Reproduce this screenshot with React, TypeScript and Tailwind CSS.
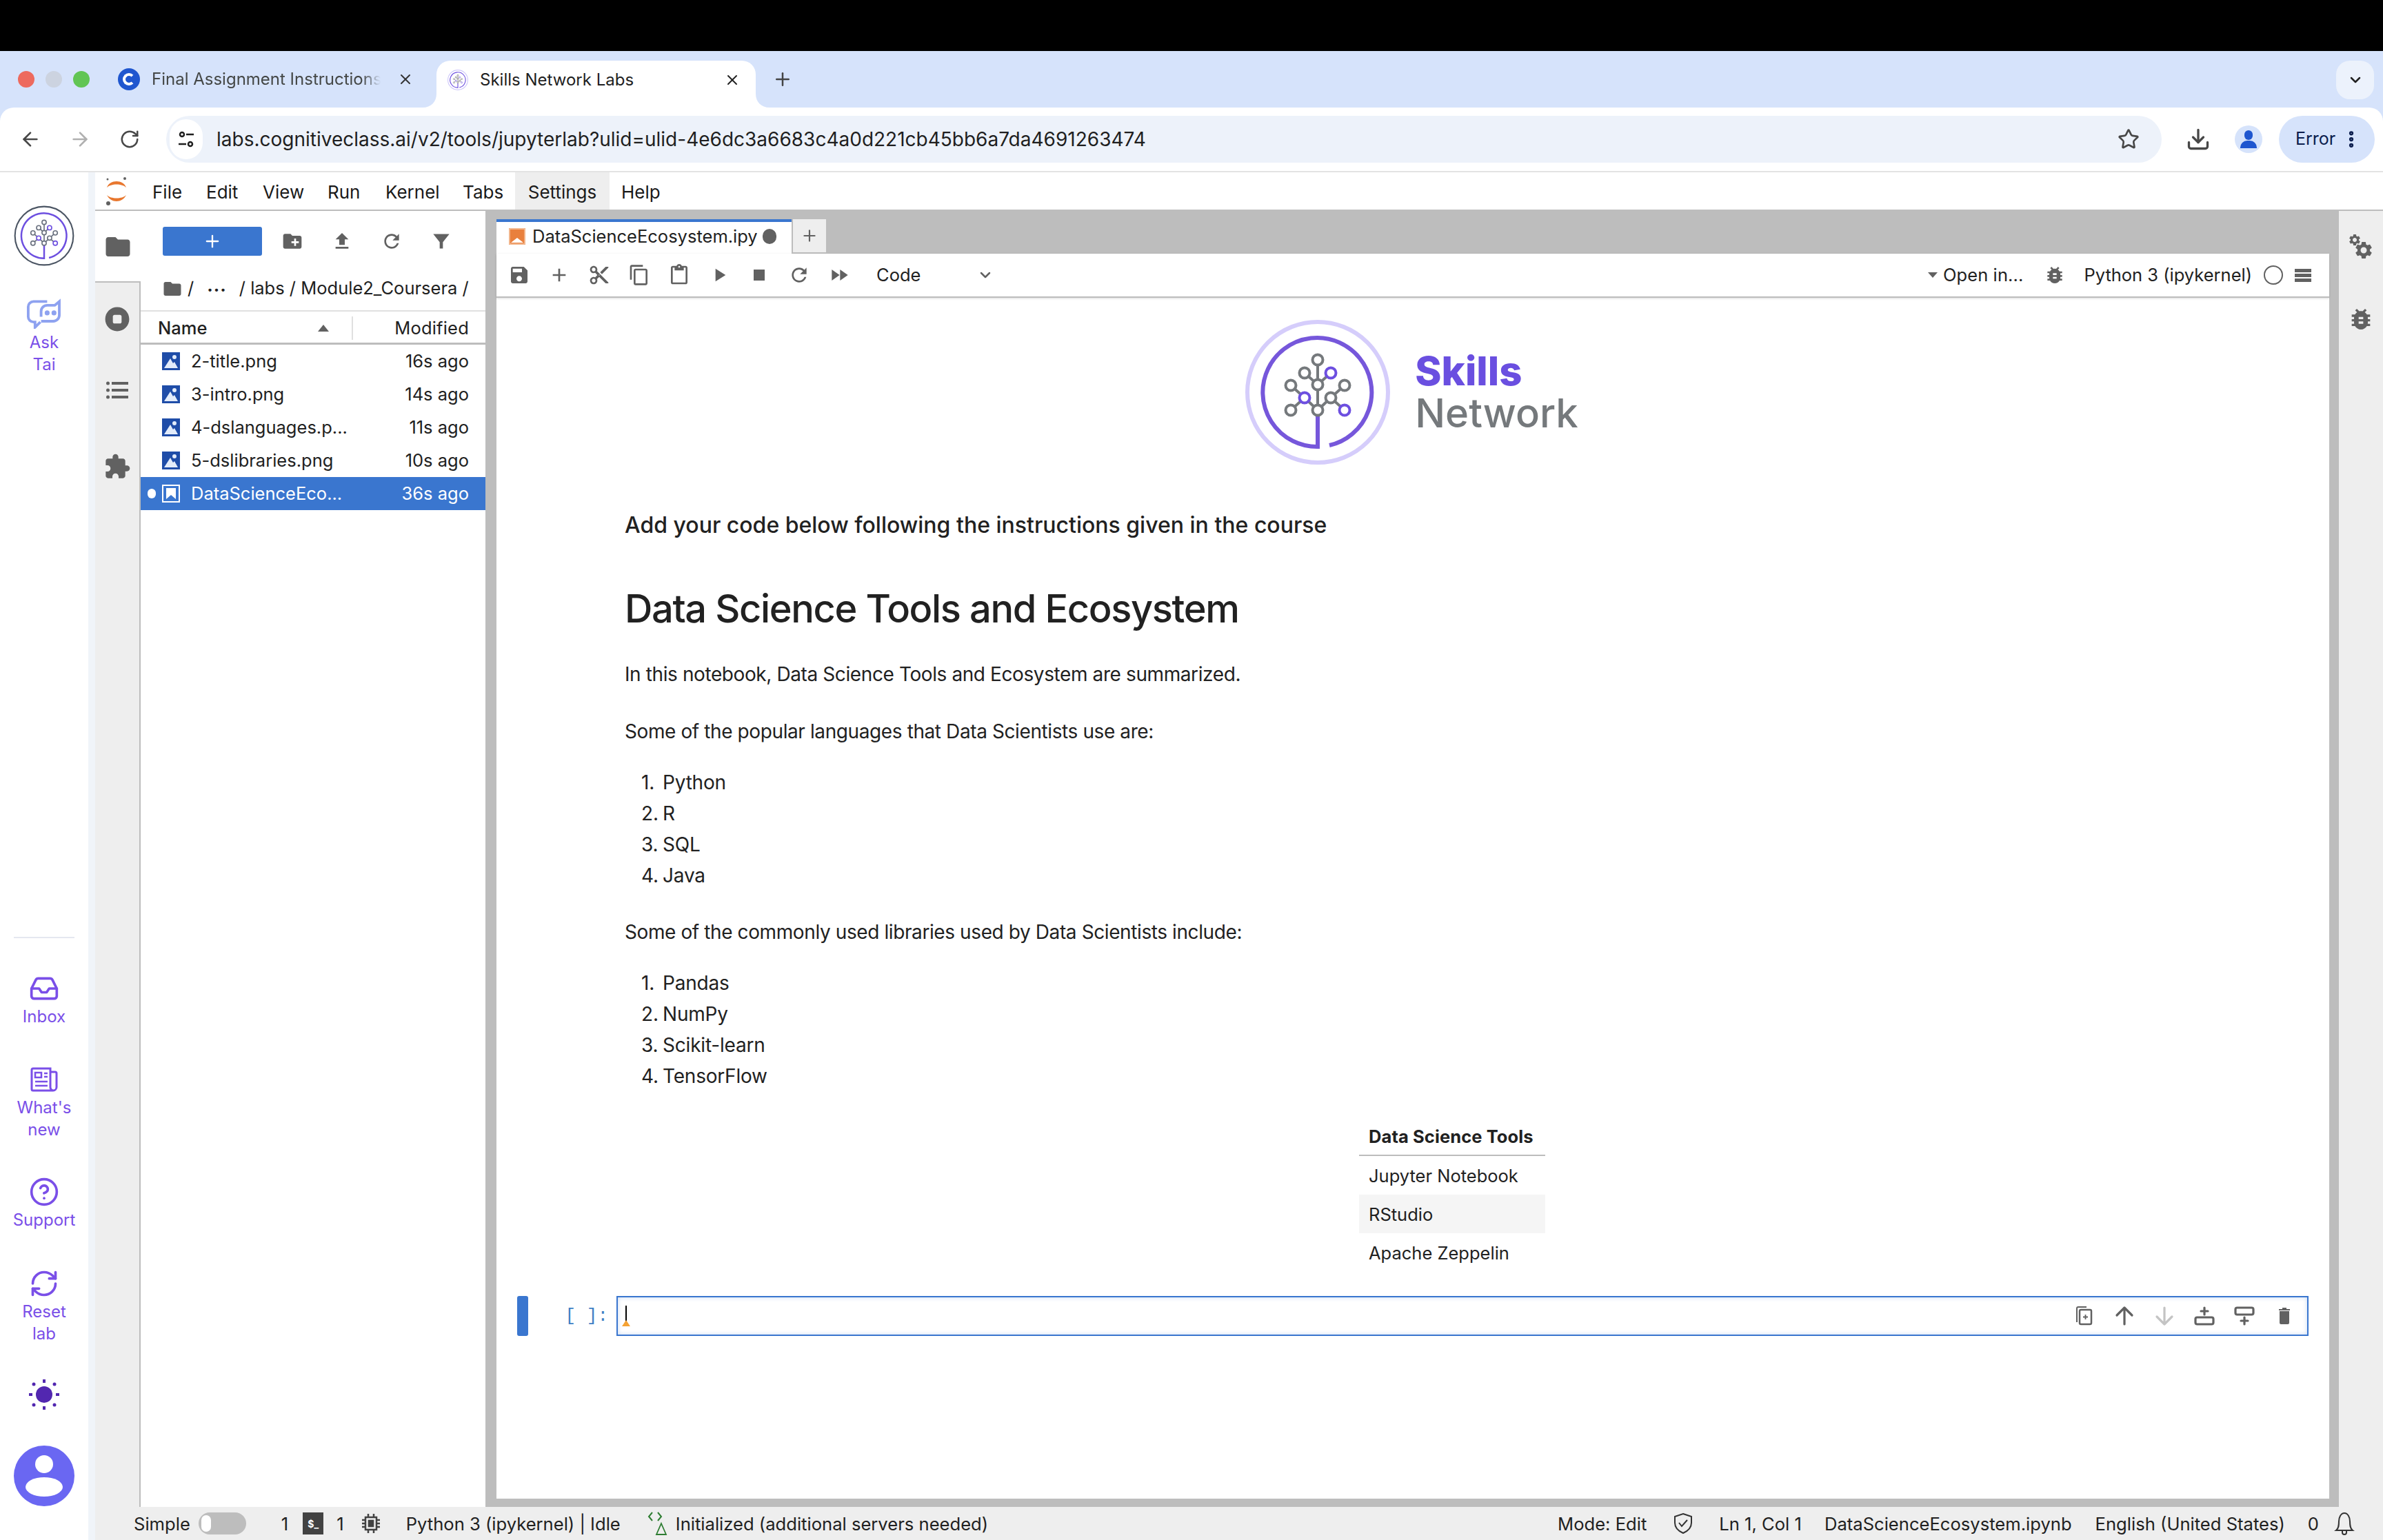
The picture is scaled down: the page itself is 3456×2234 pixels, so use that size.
import { ArrowLeft, ArrowRight, ChevronDown, Download, Plus, RotateCw, Star, X, EllipsisVertical, Inbox, HelpCircle, RefreshCw } from 'lucide-react';

const P = {
  folder: 'M10 4H4c-1.1 0-1.99.9-1.99 2L2 18c0 1.1.9 2 2 2h16c1.1 0 2-.9 2-2V8c0-1.1-.9-2-2-2h-8l-2-2z',
  newFolder: 'M20 6h-8l-2-2H4c-1.11 0-1.99.89-1.99 2L2 18c0 1.11.89 2 2 2h16c1.11 0 2-.89 2-2V8c0-1.11-.89-2-2-2zm-1 8h-3v3h-2v-3h-3v-2h3V9h2v3h3v2z',
  upload: 'M9 16h6v-6h4l-7-7-7 7h4zm-4 2h14v2H5z',
  refresh: 'M17.65 6.35C16.2 4.9 14.21 4 12 4c-4.42 0-7.99 3.58-7.99 8s3.57 8 7.99 8c3.73 0 6.84-2.55 7.73-6h-2.08c-.82 2.33-3.04 4-5.65 4-3.31 0-6-2.69-6-6s2.69-6 6-6c1.66 0 3.14.69 4.22 1.78L13 11h7V4l-2.35 2.35z',
  filter: 'M2 3h20l-8 10v8h-4v-8z',
  stopCircle: 'M12 1C5.9 1 1 5.9 1 12s4.9 11 11 11 11-4.9 11-11S18.1 1 12 1zm4 13.5c0 .8-.7 1.5-1.5 1.5h-5c-.8 0-1.5-.7-1.5-1.5v-5C8 8.700 8.700 8 9.500 8h5c.8 0 1.500.7 1.500 1.500z',
  puzzle: 'M20.5 11H19V7c0-1.1-.9-2-2-2h-4V3.5C13 2.12 11.88 1 10.5 1S8 2.12 8 3.5V5H4c-1.1 0-1.99.9-1.99 2v3.8H3.5c1.49 0 2.7 1.21 2.7 2.7s-1.21 2.7-2.7 2.7H2V20c0 1.1.9 2 2 2h3.8v-1.5c0-1.49 1.21-2.7 2.7-2.7 1.49 0 2.7 1.21 2.7 2.7V22H17c1.1 0 2-.9 2-2v-4h1.5c1.38 0 2.5-1.12 2.5-2.5S21.88 11 20.5 11z',
  save: 'M17 3H5c-1.11 0-2 .9-2 2v14c0 1.1.89 2 2 2h14c1.1 0 2-.9 2-2V7l-4-4zm-5 16c-1.66 0-3-1.34-3-3s1.34-3 3-3 3 1.34 3 3-1.34 3-3 3zm3-10H5V5h10v4z',
  add: 'M19 13h-6v6h-2v-6H5v-2h6V5h2v6h6v2z',
  cut: 'M9.64 7.64c.23-.5.36-1.05.36-1.64 0-2.21-1.79-4-4-4S2 3.79 2 6s1.79 4 4 4c.59 0 1.14-.13 1.64-.36L10 12l-2.36 2.36C7.14 14.13 6.59 14 6 14c-2.21 0-4 1.79-4 4s1.79 4 4 4 4-1.79 4-4c0-.59-.13-1.14-.36-1.64L12 14l7 7h3v-1L9.64 7.64zM6 8c-1.1 0-2-.89-2-2s.9-2 2-2 2 .89 2 2-.9 2-2 2zm0 12c-1.1 0-2-.89-2-2s.9-2 2-2 2 .89 2 2-.9 2-2 2zm6-7.5c-.28 0-.5-.22-.5-.5s.22-.5.5-.5.5.22.5.5-.22.5-.5.5zM19 3l-6 6 2 2 7-7V3z',
  copy: 'M16 1H4c-1.1 0-2 .9-2 2v14h2V3h12V1zm3 4H8c-1.1 0-2 .9-2 2v14c0 1.1.9 2 2 2h11c1.1 0 2-.9 2-2V7c0-1.1-.9-2-2-2zm0 16H8V7h11v14z',
  paste: 'M19 2h-4.18C14.4.84 13.3 0 12 0c-1.3 0-2.4.84-2.82 2H5c-1.1 0-2 .9-2 2v16c0 1.1.9 2 2 2h14c1.1 0 2-.9 2-2V4c0-1.1-.9-2-2-2zm-7 0c.55 0 1 .45 1 1s-.45 1-1 1-1-.45-1-1 .45-1 1-1zm7 18H5V4h2v3h10V4h2v16z',
  run: 'M8 5v14l11-7z',
  stop: 'M6 6h12v12H6z',
  ff: 'M4 18l8.5-6L4 6v12zm9-12v12l8.5-6L13 6z',
  bug: 'M20 8h-2.81c-.45-.78-1.07-1.45-1.82-1.96L17 4.41 15.59 3l-2.17 2.17C12.96 5.06 12.49 5 12 5c-.49 0-.96.06-1.41.17L8.41 3 7 4.41l1.62 1.63C7.88 6.55 7.26 7.22 6.81 8H4v2h2.09c-.05.33-.09.66-.09 1v1H4v2h2v1c0 .34.04.67.09 1H4v2h2.81c1.04 1.79 2.97 3 5.19 3s4.15-1.21 5.19-3H20v-2h-2.09c.05-.33.09-.66.09-1v-1h2v-2h-2v-1c0-.34-.04-.67-.09-1H20V8zm-6 8h-4v-2h4v2zm0-4h-4v-2h4v2z',
  gear: 'M19.14 12.94c.04-.3.06-.61.06-.94 0-.32-.02-.64-.07-.94l2.03-1.58c.18-.14.23-.41.12-.61l-1.92-3.32c-.12-.22-.37-.29-.59-.22l-2.39.96c-.5-.38-1.03-.7-1.62-.94l-.36-2.54c-.04-.24-.24-.41-.48-.41h-3.84c-.24 0-.43.17-.47.41l-.36 2.54c-.59.24-1.13.57-1.62.94l-2.39-.96c-.22-.08-.47 0-.59.22L2.74 8.87c-.12.21-.08.47.12.61l2.03 1.58c-.05.3-.09.63-.09.94s.02.64.07.94l-2.03 1.58c-.18.14-.23.41-.12.61l1.92 3.32c.12.22.37.29.59.22l2.39-.96c.5.38 1.03.7 1.62.94l.36 2.54c.05.24.24.41.48.41h3.84c.24 0 .44-.17.47-.41l.36-2.54c.59-.24 1.13-.56 1.62-.94l2.39.96c.22.08.47 0 .59-.22l1.92-3.32c.12-.22.07-.47-.12-.61l-2.01-1.58zM12 15.6c-1.98 0-3.6-1.62-3.6-3.6s1.62-3.6 3.6-3.6 3.6 1.62 3.6 3.6-1.62 3.6-3.6 3.6z',
};

function Icon({ d, size = 28, color = '#616161' }: { d: string; size?: number; color?: string }) {
  return (
    <svg width={size} height={size} viewBox="0 0 24 24" fill={color} className="shrink-0">
      <path d={d} />
    </svg>
  );
}

function TreeLogo({ size, outer, inner, gray, accent, outerWidth = 6, innerWidth = 6 }: { size: number; outer: string; inner: string; gray: string; accent: string; outerWidth?: number; innerWidth?: number }) {
  const nodes: [number, number, boolean][] = [
    [0, -47, false], [-19, -28, false], [19, -28, true], [0, -11, false], [-39, -10, false], [39, -10, false],
    [-19, 8, true], [19, 8, false], [-39, 26, false], [0, 26, false], [39, 26, true],
  ];
  const edges = [
    [0, -47, 0, 26], [-19, -28, 0, -11], [19, -28, 0, -11], [-39, -10, -19, 8], [39, -10, 19, 8],
    [-19, 8, 0, 26], [19, 8, 0, 26], [-39, 26, -19, 8], [39, 26, 19, 8],
  ];
  return (
    <svg width={size} height={size} viewBox="-106 -106 212 212" className="shrink-0">
      <circle r={102} fill="none" stroke={outer} strokeWidth={outerWidth} />
      <path d="M0 33V79A79 79 0 1 1 17 77" fill="none" stroke={inner} strokeWidth={innerWidth} />
      {edges.map((e, i) => (
        <line key={i} x1={e[0]} y1={e[1]} x2={e[2]} y2={e[3]} stroke={gray} strokeWidth={4} />
      ))}
      {nodes.map((n, i) => (
        <circle key={i} cx={n[0]} cy={n[1]} r={7.5} fill="#fff" stroke={n[2] ? accent : gray} strokeWidth={4} />
      ))}
    </svg>
  );
}

function ImageFileIcon() {
  return (
    <svg width="26" height="26" viewBox="0 0 26 26" className="shrink-0">
      <rect width="26" height="26" fill="#1f4da8" />
      <circle cx="18" cy="7" r="3" fill="#e3ecfa" />
      <path d="M3 23L12 9l4 7 2-2 5 9z" fill="#e3ecfa" />
    </svg>
  );
}

function NotebookIcon({ selected }: { selected?: boolean }) {
  if (selected) {
    return (
      <svg width="26" height="26" viewBox="0 0 26 26" className="shrink-0">
        <rect x="1" y="1" width="24" height="24" fill="none" stroke="#fff" strokeWidth="2" />
        <path d="M6 5h14v16l-7-6-7 6z" fill="#fff" />
      </svg>
    );
  }
  return (
    <svg width="24" height="24" viewBox="0 0 24 24" className="shrink-0">
      <rect width="24" height="24" fill="#e9803d" />
      <rect x="1" y="1" width="22" height="22" fill="none" stroke="#f5c6a5" strokeWidth="1.500" />
      <path d="M5 4h14v16l-7-5-7 5z" fill="#e9803d" />
      <path d="M3 21l9-7 9 7z" fill="#fff" />
    </svg>
  );
}

function JupyterMark() {
  return (
    <svg width="32" height="44" viewBox="0 0 32 44" className="shrink-0">
      <path d="M2 17C6 5 26 5 30 17C24 11 8 11 2 17z" fill="#e8772e" />
      <path d="M2 28C8 40 24 40 30 28C24 34 8 34 2 28z" fill="#e8772e" />
      <circle cx="28" cy="4" r="2" fill="#616161" />
      <circle cx="3" cy="5" r="1.500" fill="#616161" />
      <circle cx="4" cy="40" r="3" fill="#616161" />
    </svg>
  );
}

function RailItem({ icon, lines }: { icon: React.ReactNode; lines: string[] }) {
  return (
    <div className="flex flex-col items-center">
      <div className="h-[44px] flex items-center justify-center">{icon}</div>
      <div className="mt-[3px] flex flex-col items-center text-[24px] leading-[32px] text-[#7a4fe8]">
        {lines.map((l) => (
          <span key={l}>{l}</span>
        ))}
      </div>
    </div>
  );
}

function SnRail() {
  const purple = '#7a4fe8';
  return (
    <div className="w-[128px] shrink-0 bg-white flex flex-col items-center">
      <div className="mt-[48px]">
        <TreeLogo size={88} outer="#4b5563" inner="#6d4fe0" gray="#6b7280" accent="#6d4fe0" outerWidth={5} innerWidth={6} />
      </div>
      <div className="mt-[47px] flex flex-col items-center">
        <svg width="54" height="44" viewBox="0 0 48 40" fill="none" stroke="#8ea2f0" strokeWidth="3.500" className="block">
          <path d="M28 4H10a7 7 0 0 0-7 7v13a7 7 0 0 0 7 7h2v7l7-7" />
          <path d="M20 24V17a8 8 0 0 1 8-8h10l6-5v18a8 8 0 0 1-8 8H20" fill="#fff" />
          <circle cx="28" cy="19" r="1.500" fill="#8ea2f0" />
          <circle cx="37" cy="19" r="1.500" fill="#8ea2f0" />
        </svg>
        <div className="mt-[4px] flex flex-col items-center text-[24px] leading-[32px] text-[#7a4fe8]">
          <span>Ask</span>
          <span>Tai</span>
        </div>
      </div>
      <div className="flex-1" />
      <div className="w-[88px] h-[2px] bg-[#e5e7f0]" />
      <div className="mt-[51px]">
        <RailItem icon={<Inbox size={44} color={purple} strokeWidth={2} />} lines={['Inbox']} />
      </div>
      <div className="mt-[53px]">
        <RailItem
          icon={
            <svg width="42" height="38" viewBox="0 0 42 38" fill="none" stroke={purple} strokeWidth="3">
              <path d="M30 3H5a2 2 0 0 0-2 2v28a2 2 0 0 0 2 2h29a5 5 0 0 1-4-5zM30 8h7a2 2 0 0 1 2 2v20a5 5 0 0 1-5 5" />
              <path d="M8 9h9v7H8zM21 10h5M21 15h5M8 22h18M8 28h18" strokeWidth="2.500" />
            </svg>
          }
          lines={["What's", 'new']}
        />
      </div>
      <div className="mt-[52px]">
        <RailItem icon={<HelpCircle size={44} color={purple} strokeWidth={2} />} lines={['Support']} />
      </div>
      <div className="mt-[54px]">
        <RailItem icon={<RefreshCw size={44} color={purple} strokeWidth={2} />} lines={['Reset', 'lab']} />
      </div>
      <div className="mt-[49px]">
        <svg width="46" height="46" viewBox="0 0 46 46" fill="#5227b0" className="block">
          <circle cx="23" cy="23" r="12" />
          <rect x="21" y="1" width="4" height="5" />
          <rect x="21" y="40" width="4" height="5" />
          <rect x="1" y="21" width="5" height="4" />
          <rect x="40" y="21" width="5" height="4" />
          <circle cx="8" cy="8" r="2.500" />
          <circle cx="38" cy="8" r="2.500" />
          <circle cx="8" cy="38" r="2.500" />
          <circle cx="38" cy="38" r="2.500" />
        </svg>
      </div>
      <div className="mt-[51px] mb-[49px]">
        <svg width="88" height="88" viewBox="0 0 88 88" className="block">
          <circle cx="44" cy="44" r="44" fill="#6a67f2" />
          <circle cx="44" cy="27" r="13" fill="#fff" />
          <ellipse cx="44" cy="60" rx="27" ry="14" fill="#fff" />
        </svg>
      </div>
    </div>
  );
}

function ChromeBars() {
  return (
    <>
      <div className="h-[74px] bg-black shrink-0" />
      <div className="h-[82px] bg-[#d6e3fb] shrink-0 flex items-start relative">
        <div className="flex items-center gap-[16px] ml-[26px] mt-[29px]">
          <span className="w-[24px] h-[24px] rounded-full bg-[#ed6a5e]" />
          <span className="w-[24px] h-[24px] rounded-full bg-[#ccd3e0]" />
          <span className="w-[24px] h-[24px] rounded-full bg-[#61c554]" />
        </div>
        <div className="flex items-center ml-[41px] mt-[25px]">
          <span className="w-[32px] h-[32px] rounded-full bg-[#1f56cf] flex items-center justify-center">
            <span className="w-[18px] h-[18px] rounded-full border-[4px] border-white border-r-transparent" />
          </span>
          <span className="ml-[17px] w-[332px] overflow-hidden whitespace-nowrap text-[24px] leading-[32px] text-[#444746] [mask-image:linear-gradient(to_right,black_92%,transparent)]">Final Assignment Instructions</span>
          <X size={24} color="#333" className="ml-[24px]" />
        </div>
        <div className="relative ml-[33px] mt-[14px] w-[463px] h-[68px] bg-white rounded-t-[20px] flex items-center">
          <svg width="20" height="20" viewBox="0 0 20 20" className="absolute -left-[20px] bottom-0"><path d="M20 0V20H0C12 20 20 12 20 0z" fill="#fff" /></svg>
          <svg width="20" height="20" viewBox="0 0 20 20" className="absolute -right-[20px] bottom-0"><path d="M0 0V20H20C8 20 0 12 0 0z" fill="#fff" /></svg>
          <span className="ml-[16px] -mt-[12px]"><TreeLogo size={30} outer="#cfc8fa" inner="#6d4fe0" gray="#666" accent="#6d4fe0" outerWidth={8} innerWidth={8} /></span>
          <span className="ml-[17px] -mt-[12px] w-[354px] text-[24px] leading-[32px] text-[#1f1f1f]">Skills Network Labs</span>
          <X size={24} color="#222" className="-mt-[12px]" />
        </div>
        <Plus size={30} color="#444" strokeWidth={2} className="ml-[24px] mt-[26px]" />
        <div className="flex-1" />
        <div className="w-[55px] h-[56px] bg-[#ecf2fc] rounded-[20px] mt-[14px] mr-[13px] flex items-center justify-center">
          <ChevronDown size={24} color="#222" strokeWidth={2.500} />
        </div>
      </div>
      <div className="h-[92px] bg-[#d6e3fb] shrink-0">
        <div className="h-full bg-white rounded-t-[20px] flex items-center">
          <ArrowLeft size={32} color="#474747" strokeWidth={2} className="ml-[28px]" />
          <ArrowRight size={32} color="#b0b0b0" strokeWidth={2} className="ml-[40px]" />
          <RotateCw size={30} color="#474747" strokeWidth={2} className="ml-[41px]" />
          <div className="ml-[38px] w-[2894px] h-[68px] bg-[#edf2fa] rounded-full flex items-center">
            <span className="ml-[5px] w-[48px] h-[58px] bg-white rounded-full flex items-center justify-center">
              <svg width="26" height="26" viewBox="0 0 26 26" fill="none" stroke="#1f1f1f" strokeWidth="2.500">
                <circle cx="7" cy="6" r="3" />
                <path d="M13 6h11M2 20h11" />
                <circle cx="19" cy="20" r="3" />
              </svg>
            </span>
            <span className="ml-[20px] text-[28px] leading-[40px] text-[#1f1f1f] whitespace-nowrap">labs.cognitiveclass.ai/v2/tools/jupyterlab?ulid=ulid-4e6dc3a6683c4a0d221cb45bb6a7da4691263474</span>
            <div className="flex-1" />
            <Star size={32} color="#474747" strokeWidth={2} className="mr-[32px]" />
          </div>
          <Download size={36} color="#474747" strokeWidth={2.200} className="ml-[35px]" />
          <span className="ml-[35px] w-[40px] h-[40px] rounded-full bg-[#d6e3fb] flex flex-col items-center justify-center">
            <span className="w-[12px] h-[14px] rounded-full bg-[#1f56cf]" />
            <span className="w-[24px] h-[11px] rounded-t-[10px] bg-[#1f56cf] mt-[1px]" />
          </span>
          <div className="ml-[24px] w-[139px] h-[68px] rounded-full bg-[#d6e3fb] flex items-center text-[25px] text-[#0b1d4d]">
            <span className="ml-[24px]">Error</span>
            <EllipsisVertical size={30} color="#0b1d4d" strokeWidth={3} className="ml-[8px]" />
          </div>
        </div>
      </div>
      <div className="h-[2px] bg-[#e3e3e3] shrink-0" />
    </>
  );
}

function MenuBar() {
  const items: [string, string][] = [
    ['File', 'w-[78px] ml-[36px]'],
    ['Edit', 'w-[82px]'],
    ['View', 'w-[94px]'],
    ['Run', 'w-[84px]'],
    ['Kernel', 'w-[112px]'],
    ['Tabs', 'w-[74px]'],
  ];
  return (
    <div className="h-[56px] shrink-0 border-b-2 border-[#bdbdbd] flex items-stretch text-[26px] text-[#1a1a1a] bg-white">
      <div className="ml-[15px] flex items-center"><JupyterMark /></div>
      <div className="flex items-stretch pt-[2px]">
        {items.map(([t, c]) => (
          <div key={t} className={`${c} flex items-center`}>{t}</div>
        ))}
      </div>
      <div className="ml-[2px] bg-[#eeeeee] w-[137px] flex items-center justify-center pt-[2px]">Settings</div>
      <div className="ml-[17px] flex items-center pt-[2px]">Help</div>
    </div>
  );
}

function FilePanel() {
  const rows = [
    ['2-title.png', '16s ago'],
    ['3-intro.png', '14s ago'],
    ['4-dslanguages.p...', '11s ago'],
    ['5-dslibraries.png', '10s ago'],
  ];
  return (
    <div className="w-[500px] shrink-0 bg-white flex flex-col text-[25.5px] text-[#212121]">
      <div className="h-[89px] shrink-0 flex items-center pl-[32px] pt-[8px]">
        <div className="w-[144px] h-[42px] bg-[#3a76cf] rounded-[3px] flex items-center justify-center -mt-[9px]">
          <Plus size={28} color="#fff" strokeWidth={2} />
        </div>
        <div className="flex items-center ml-[8px] -mt-[9px]">
          <span className="w-[72px] flex justify-center"><Icon d={P.newFolder} size={32} /></span>
          <span className="w-[72px] flex justify-center"><Icon d={P.upload} size={32} /></span>
          <span className="w-[72px] flex justify-center"><Icon d={P.refresh} size={32} /></span>
          <span className="w-[72px] flex justify-center"><Icon d={P.filter} size={28} /></span>
        </div>
      </div>
      <div className="h-[57px] shrink-0 flex items-center pl-[31px] border-b-2 border-[#e0e0e0] whitespace-nowrap pb-[8px]">
        <Icon d={P.folder} size={30} />
        <span className="ml-[7px]">/</span>
        <span className="ml-[19px] tracking-[1px] -mt-[8px] font-bold">...</span>
        <span className="ml-[18px]">/ labs / Module2_Coursera /</span>
      </div>
      <div className="h-[48px] shrink-0 flex items-center pt-[3px] border-b-[3px] border-[#bdbdbd] font-medium">
        <span className="ml-[25px] w-[232px]">Name</span>
        <svg width="16" height="10" viewBox="0 0 16 10" className="shrink-0"><path d="M8 0l8 10H0z" fill="#616161" /></svg>
        <span className="ml-[33px] w-[2px] h-[34px] bg-[#e0e0e0]" />
        <span className="flex-1 text-right pr-[24px] font-normal tracking-[0.2px]">Modified</span>
      </div>
      {rows.map(([n, t]) => (
        <div key={n} className="h-[48px] shrink-0 flex items-center">
          <span className="ml-[31px]"><ImageFileIcon /></span>
          <span className="ml-[16px] flex-1 whitespace-nowrap">{n}</span>
          <span className="pr-[24px]">{t}</span>
        </div>
      ))}
      <div className="h-[48px] shrink-0 flex items-center bg-[#3a76cf] text-white">
        <span className="ml-[10px] w-[12px] h-[14px] rounded-full bg-white" />
        <span className="ml-[9px]"><NotebookIcon selected /></span>
        <span className="ml-[16px] flex-1 whitespace-nowrap">DataScienceEco...</span>
        <span className="pr-[24px]">36s ago</span>
      </div>
    </div>
  );
}

function LeftRail() {
  return (
    <div className="w-[66px] shrink-0 flex flex-col items-center bg-[#eeeeee]">
      <div className="w-full h-[104px] shrink-0 bg-white border-b-2 border-[#bdbdbd] flex items-center justify-center pt-[2px]">
        <Icon d={P.folder} size={42} />
      </div>
      <div className="w-full flex-1 border-r-2 border-[#bdbdbd] flex flex-col items-center pt-[34px]">
        <Icon d={P.stopCircle} size={38} />
        <svg width="32" height="26" viewBox="0 0 32 26" fill="#616161" className="mt-[71px]">
          <circle cx="2.500" cy="3" r="2.500" />
          <circle cx="2.500" cy="13" r="2.500" />
          <circle cx="2.500" cy="23" r="2.500" />
          <rect x="8" y="1" width="24" height="4" />
          <rect x="8" y="11" width="24" height="4" />
          <rect x="8" y="21" width="24" height="4" />
        </svg>
        <span className="mt-[78px]"><Icon d={P.puzzle} size={40} /></span>
      </div>
    </div>
  );
}

function NbToolbar() {
  const icons = [P.save, P.add, P.cut, P.copy, P.paste, P.run, P.stop, P.refresh, P.ff];
  return (
    <div className="h-[64px] shrink-0 bg-white border-b-2 border-[#bdbdbd] shadow-[0_1px_3px_rgba(0,0,0,0.15)] flex items-center text-[25.5px] text-[#212121] relative">
      <div className="flex items-center ml-[4px]">
        {icons.map((d, i) => (
          <span key={i} className="w-[58px] flex justify-center"><Icon d={d} size={32} /></span>
        ))}
      </div>
      <span className="ml-[25px] w-[146px]">Code</span>
      <ChevronDown size={24} color="#616161" strokeWidth={2.500} />
      <div className="flex-1" />
      <svg width="14" height="8" viewBox="0 0 14 8" className="mr-[8px]"><path d="M0 0h14L7 8z" fill="#616161" /></svg>
      <span className="tracking-[0.1px]">Open in...</span>
      <span className="ml-[30px]"><Icon d={P.bug} size={32} /></span>
      <span className="ml-[26px]">Python 3 (ipykernel)</span>
      <span className="ml-[17px] w-[28px] h-[28px] rounded-full border-[2.500px] border-[#616161]" />
      <span className="ml-[17px] mr-[26px] flex flex-col gap-[2px]">
        <span className="w-[24px] h-[5px] bg-[#616161]" />
        <span className="w-[24px] h-[5px] bg-[#616161]" />
        <span className="w-[24px] h-[5px] bg-[#616161]" />
      </span>
    </div>
  );
}

function CellIcons() {
  const c = '#616161';
  return (
    <div className="flex items-center mr-[4px]">
      <svg width="58" height="30" viewBox="0 0 58 30" fill="none" stroke={c} strokeWidth="2">
        <path d="M18 24V4a2 2 0 0 1 2-2h12" />
        <rect x="22" y="6" width="17" height="21" rx="2" strokeWidth="2.500" />
        <path d="M30.500 13v7M27 16.500h7" strokeWidth="1.800" />
      </svg>
      <svg width="58" height="30" viewBox="0 0 58 30" fill="none" stroke={c} strokeWidth="3.200" strokeLinecap="round" strokeLinejoin="round">
        <path d="M29 27V3M18 14L29 3l11 11" />
      </svg>
      <svg width="58" height="30" viewBox="0 0 58 30" fill="none" stroke="#c4c4c4" strokeWidth="3.200" strokeLinecap="round" strokeLinejoin="round">
        <path d="M29 3v24M18 16l11 11 11-11" />
      </svg>
      <svg width="58" height="30" viewBox="0 0 58 30" fill="none" stroke={c} strokeWidth="3.200" strokeLinecap="round">
        <rect x="16" y="17" width="26" height="10" rx="2.500" />
        <path d="M29 3v10M24 8h10" />
      </svg>
      <svg width="58" height="30" viewBox="0 0 58 30" fill="none" stroke={c} strokeWidth="3.200" strokeLinecap="round">
        <rect x="16" y="3" width="26" height="10" rx="2.500" />
        <path d="M29 17v10M24 22h10" />
      </svg>
      <svg width="58" height="30" viewBox="0 0 58 30" fill={c}>
        <path d="M21 5h16v2H21zM26 3h6v2h-6zM22 8h14v17a2 2 0 0 1-2 2H24a2 2 0 0 1-2-2z" />
      </svg>
    </div>
  );
}

function NotebookDoc() {
  const li = 'h-[45px] flex items-center';
  const p = 'h-[40px] flex items-center text-[28px] tracking-[-0.4px] text-[#212121]';
  const num = 'w-[55px] pl-[24px] shrink-0';
  return (
    <div className="flex-1 bg-white flex flex-col overflow-hidden text-[#212121]">
      <div className="mt-[32px] mr-[4px] flex justify-center items-center h-[210px] shrink-0">
        <TreeLogo size={212} outer="#d5cdfb" inner="#7657db" gray="#75797c" accent="#6d4fe0" />
        <div className="ml-[35px] flex flex-col -mt-[2px]">
          <span className="text-[58px] leading-[62px] font-extrabold text-[#6a4fe0]">Skills</span>
          <span className="text-[58px] leading-[60px] font-medium text-[#75797c]">Network</span>
        </div>
      </div>
      <div className="ml-[186px] flex flex-col">
        <div className="mt-[68px] h-[40px] flex items-center text-[32px] font-medium">Add your code below following the instructions given in the course</div>
        <div className="mt-[66px] h-[70px] flex items-center text-[56px] font-medium tracking-[-1.4px]">Data Science Tools and Ecosystem</div>
        <div className={`mt-[40px] ${p}`}>In this notebook, Data Science Tools and Ecosystem are summarized.</div>
        <div className={`mt-[43px] ${p}`}>Some of the popular languages that Data Scientists use are:</div>
        <div className="mt-[31px] text-[28px] tracking-[-0.2px]">
          {['Python', 'R', 'SQL', 'Java'].map((t, i) => (
            <div key={t} className={li}><span className={num}>{i + 1}.</span>{t}</div>
          ))}
        </div>
        <div className={`mt-[40px] ${p}`}>Some of the commonly used libraries used by Data Scientists include:</div>
        <div className="mt-[31px] text-[28px] tracking-[-0.2px]">
          {['Pandas', 'NumPy', 'Scikit-learn', 'TensorFlow'].map((t, i) => (
            <div key={t} className={li}><span className={num}>{i + 1}.</span>{t}</div>
          ))}
        </div>
      </div>
      <div className="ml-[1251px] mt-[38px] w-[270px] text-[25.5px] flex flex-col">
        <div className="h-[56px] flex items-center px-[14px] pt-[2px] font-bold border-b-2 border-[#bdbdbd] whitespace-nowrap tracking-[0.1px]">Data Science Tools</div>
        <div className="h-[56px] flex items-center px-[14px] pt-[3px]">Jupyter Notebook</div>
        <div className="h-[56px] flex items-center px-[14px] pt-[3px] bg-[#f5f5f5]">RStudio</div>
        <div className="h-[56px] flex items-center px-[14px] pt-[3px]">Apache Zeppelin</div>
      </div>
      <div className="mt-[35px] ml-[30px] flex items-stretch h-[58px]">
        <div className="w-[16px] bg-[#3a76cf] rounded-[3px]" />
        <div className="w-[128px] pr-[12px] flex items-center justify-end text-[26px] text-[#3f7fc4] [font-family:'Liberation_Mono',monospace] whitespace-pre">[ ]:</div>
        <div className="w-[2454px] border-2 border-[#3a76cf] shadow-[inset_0_0_6px_rgba(58,118,207,0.3)] flex items-center justify-between relative">
          <div className="relative ml-[11px] w-[2px] h-[30px] bg-black">
            <svg width="12" height="9" viewBox="0 0 12 9" className="absolute left-[-5px] bottom-0"><path d="M6 0l6 9H0z" fill="#f5a233" /></svg>
          </div>
          <CellIcons />
        </div>
      </div>
    </div>
  );
}

function RightRail() {
  return (
    <div className="w-[64px] shrink-0 bg-[#eeeeee] flex flex-col items-center pt-[28px]">
      <div className="relative w-[36px] h-[56px]">
        <span className="absolute -left-[1px] top-[4px]"><Icon d={P.gear} size={20} /></span>
        <span className="absolute left-[7px] top-[14px]"><Icon d={P.gear} size={30} /></span>
      </div>
      <span className="mt-[53px]"><Icon d={P.bug} size={40} /></span>
    </div>
  );
}

function StatusBar() {
  return (
    <div className="h-[48px] shrink-0 bg-[#eeeeee] flex items-center pt-[3px] text-[25.6px] text-[#212121] whitespace-nowrap">
      <span className="ml-[56px]">Simple</span>
      <span className="ml-[12px] w-[69px] h-[32px] -mt-[3px] rounded-full bg-[#bdbdbd] flex items-center">
        <span className="ml-[4px] w-[14px] h-[24px] rounded-full bg-white" />
      </span>
      <span className="ml-[51px]">1</span>
      <span className="ml-[21px] w-[30px] h-[32px] -mt-[3px] bg-[#424242] flex items-center justify-center text-white text-[14px] font-bold">$_</span>
      <span className="ml-[19px]">1</span>
      <span className="ml-[25px]">
        <svg width="28" height="30" viewBox="0 0 28 30" fill="none" stroke="#424242" strokeWidth="2.500" className="block -mt-[3px]">
          <rect x="6" y="6" width="16" height="18" />
          <rect x="11" y="11" width="6" height="8" fill="#424242" />
          <path d="M10 1v4M18 1v4M10 25v4M18 25v4M1 10h4M1 15h4M1 20h4M23 10h4M23 15h4M23 20h4" />
        </svg>
      </span>
      <span className="ml-[37px]">Python 3 (ipykernel) | Idle</span>
      <span className="ml-[38px]">
        <svg width="30" height="36" viewBox="0 0 30 36" fill="none" stroke="#2e7d32" strokeWidth="2" className="block -mt-[3px]">
          <path d="M8 2L3 8l5 6M16 2l5 6-5 6" />
          <path d="M21 18l7 16H14z" strokeWidth="1.800" />
        </svg>
      </span>
      <span className="ml-[12px]">Initialized (additional servers needed)</span>
      <div className="flex-1" />
      <span>Mode: Edit</span>
      <span className="ml-[38px]">
        <svg width="30" height="32" viewBox="0 0 30 32" fill="none" stroke="#333" strokeWidth="2" className="block -mt-[3px]">
          <path d="M15 2l12 4v9c0 7-5 12-12 15C8 27 3 22 3 15V6z" />
          <path d="M9 15l4 5 8-9" />
        </svg>
      </span>
      <span className="ml-[37px]">Ln 1, Col 1</span>
      <span className="ml-[33px]">DataScienceEcosystem.ipynb</span>
      <span className="ml-[34px]">English (United States)</span>
      <span className="ml-[33px]">0</span>
      <span className="ml-[21px] mr-[40px]">
        <svg width="32" height="36" viewBox="0 0 32 36" fill="none" stroke="#333" strokeWidth="2" className="block -mt-[3px]">
          <path d="M4 28c4-3 4-8 4-13 0-6 3-12 8-12s8 6 8 12c0 5 0 10 4 13z" />
          <path d="M13 28v3a3 3 0 0 0 6 0v-3" />
        </svg>
      </span>
    </div>
  );
}

export default function App() {
  return (
    <div className="w-[3456px] h-[2234px] flex flex-col overflow-hidden bg-white [font-family:Inter,sans-serif]">
      <ChromeBars />
      <div className="flex-1 flex min-h-0">
        <SnRail />
        <div className="w-[10px] shrink-0 bg-[#f0f4f9]" />
        <div className="flex-1 flex flex-col min-w-0">
          <MenuBar />
          <div className="flex-1 flex min-h-0">
            <LeftRail />
            <FilePanel />
            <div className="flex-1 bg-[#bdbdbd] flex flex-col min-w-0 pl-[16px] pr-[14px] pb-[12px]">
              <div className="h-[62px] shrink-0 flex items-end pt-[12px]">
                <div className="w-[428px] h-[50px] bg-white border-t-4 border-[#3a76cf] flex items-center pb-[4px]">
                  <span className="ml-[18px]"><NotebookIcon /></span>
                  <span className="ml-[10px] w-[326px] text-[25.5px] text-[#212121] whitespace-nowrap overflow-hidden">DataScienceEcosystem.ipynb</span>
                  <span className="ml-[8px] w-[20px] h-[22px] rounded-full bg-[#616161]" />
                </div>
                <div className="ml-[2px] w-[48px] h-[48px] mb-[2px] bg-[#eeeeee] flex items-center justify-center">
                  <Plus size={26} color="#616161" strokeWidth={2} />
                </div>
              </div>
              <NbToolbar />
              <NotebookDoc />
            </div>
            <RightRail />
          </div>
          <StatusBar />
        </div>
      </div>
    </div>
  );
}
